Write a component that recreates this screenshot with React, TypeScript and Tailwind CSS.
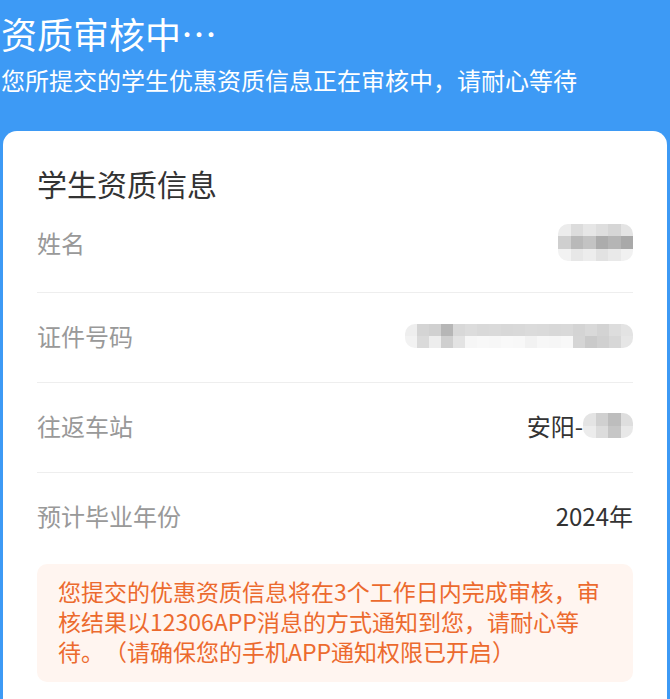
import React from 'react';

// gray shades for the blurred (mosaic) values
const NAME_CELLS = [
  ['#ececec', '#dcdcdc', '#e6e6e6', '#dedede', '#d6d6d6', '#e4e4e4'],
  ['#cfcfcf', '#b9b9b9', '#c3c3c3', '#acacac', '#b5b5b5', '#a9a9a9'],
  ['#f2f2f2', '#e7e7e7', '#ededed', '#e2e2e2', '#e9e9e9', '#f1f1f1'],
];

const ID_CELLS = [
  ['#eeeeee', '#d4d4d4', '#d0d0d0', '#b6b6b6', '#d8d8d8', '#dcdcdc', '#d9d9d9', '#dadada', '#d8d8d8', '#d9d9d9', '#dbdbdb', '#dadada', '#d8d8d8', '#d9d9d9', '#d4d4d4', '#d9d9d9', '#d3d3d3', '#dddddd', '#e3e3e3'],
  ['#f2f2f2', '#dadada', '#ededed', '#cfcfcf', '#e3e3e3', '#f6f6f6', '#f8f8f8', '#f7f7f7', '#f9f9f9', '#f8f8f8', '#f2f2f2', '#f7f7f7', '#f6f6f6', '#f8f8f8', '#d5d5d5', '#cacaca', '#d0d0d0', '#d7d7d7', '#e6e6e6'],
];

const STATION_CELLS = [
  ['#e4e4e4', '#d0d0d0', '#bdbdbd', '#dedede'],
  ['#ececec', '#dcdcdc', '#c6c6c6', '#e8e8e8'],
];

function Mosaic({ cells, cell }: { cells: string[][]; cell: number }) {
  return (
    <div className="flex flex-col overflow-hidden rounded-[10px] blur-[0.6px]">
      {cells.map((row, i) => (
        <div key={i} className="flex">
          {row.map((c, j) => (
            <div key={j} style={{ background: c, width: cell, height: cell }} />
          ))}
        </div>
      ))}
    </div>
  );
}

type Row = { label: string; value: React.ReactNode };

const rows: Row[] = [
  { label: '姓名', value: <Mosaic cells={NAME_CELLS} cell={12.5} /> },
  { label: '证件号码', value: <Mosaic cells={ID_CELLS} cell={12} /> },
  {
    label: '往返车站',
    value: (
      <div className="flex items-center">
        <span>安阳-</span>
        <Mosaic cells={STATION_CELLS} cell={12.5} />
      </div>
    ),
  },
  { label: '预计毕业年份', value: '2024年' },
];

export default function App() {
  return (
    <div
      className="min-h-[699px] w-[670px] overflow-hidden bg-[#3d9af5] [text-spacing-trim:space-all]"
      style={{ fontFamily: '"Noto Sans CJK SC", "Noto Sans", sans-serif' }}
    >
      {/* header */}
      <div className="pl-[1px] pt-[11px] text-white">
        <h1 className="text-[36px] leading-[44px] font-normal">资质审核中…</h1>
        <p className="mt-[9px] text-[24px] leading-[32px]">
          您所提交的学生优惠资质信息正在审核中，请耐心等待
        </p>
      </div>

      {/* card */}
      <div className="mx-[3px] mt-[35px] min-h-[568px] rounded-t-[14px] bg-white px-[34px] pt-[32px] pb-[14px]">
        <h2 className="text-[30px] leading-[40px] text-[#333333]">学生资质信息</h2>
        <div>
          {rows.map((r, i) => (
            <div
              key={r.label}
              className={`flex h-[90px] items-center justify-between ${
                i === 0 ? 'pb-[10px]' : 'pb-[4px]'
              } ${i < rows.length - 1 ? 'border-b border-[#eeeeee]' : ''}`}
            >
              <span className="text-[24px] text-[#999999]">{r.label}</span>
              <div className="text-[24px] text-[#333333]">{r.value}</div>
            </div>
          ))}
        </div>

        {/* notice */}
        <div className="mt-[1px] rounded-[10px] bg-[#fff5f0] px-[21px] pt-[12px] pb-[16px] text-[23px] leading-[30px] text-[#ec6a2e]">
          您提交的优惠资质信息将在3个工作日内完成审核，审核结果以12306APP消息的方式通知到您，请耐心等待。（请确保您的手机APP通知权限已开启）
        </div>
      </div>
    </div>
  );
}
